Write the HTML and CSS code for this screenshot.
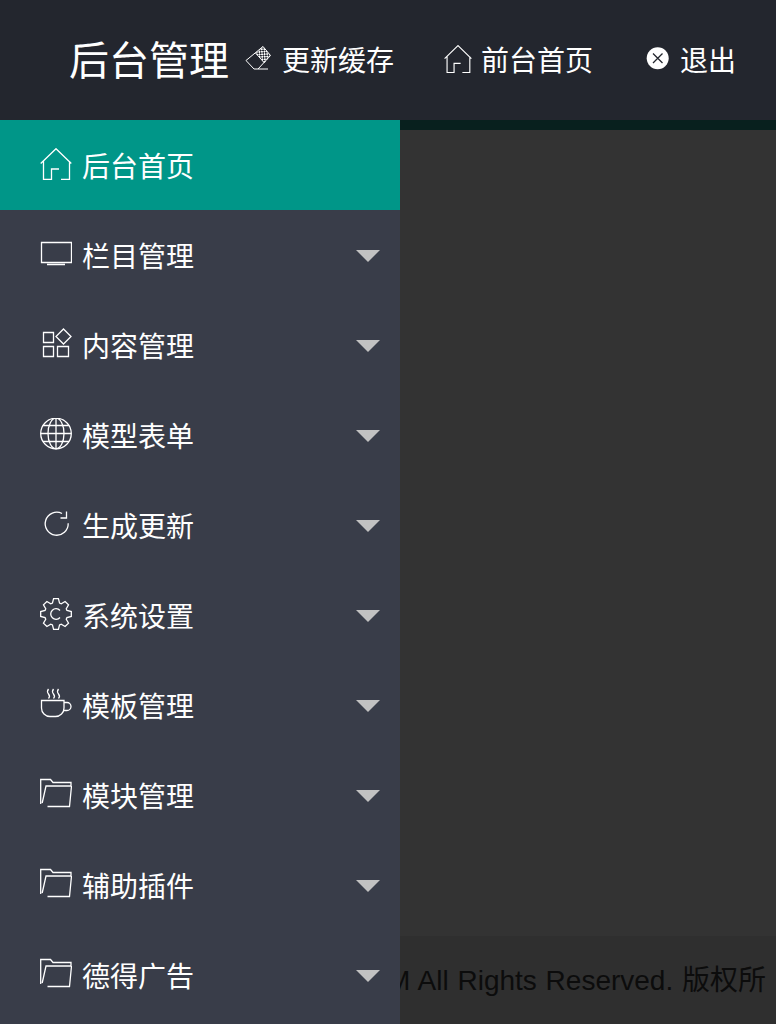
FILE: index.html
```html
<!DOCTYPE html>
<html lang="zh-CN">

<head>
    <meta charset="UTF-8">
    <meta name="viewport" content="width=device-width, initial-scale=1.0">
    <title>后台管理</title>
    <link rel="stylesheet" href="styles.css">
</head>

<body>
    <svg class="defs" width="0" height="0">
        <defs>
            <pattern id="p-check" width="3.600" height="3.600" patternUnits="userSpaceOnUse" patternTransform="rotate(42)">
                <rect width="3.600" height="3.600" fill="#fff" />
                <rect width="1.800" height="1.800" fill="#23262e" />
                <rect x="1.800" y="1.800" width="1.800" height="1.800" fill="#23262e" />
            </pattern>
        </defs>
        <symbol id="i-home" viewBox="0 0 32 32">
            <path d="M.7 15.500 16 .7l15.300 14.800M3.500 13v18.500H11.500V21H19M21 31.500h8.500V13" />
        </symbol>
        <symbol id="i-folder" viewBox="0 0 32 32">
            <path d="M.7 26V1.500h9.800l2.500 3h18v3.500M31.500 8H6L2.200 25M7.500 28.500h22L31.500 8" />
        </symbol>
    </svg>

    <header class="header">
        <div class="logo">后台管理</div>
        <nav class="top-nav">
            <a class="top-link link-cache">
                <svg class="top-icon" viewBox="0 0 28 28">
                    <path class="check" d="M18 1.500 25.500 10.500 19.500 18 10.500 8Z" />
                    <path class="thin" d="M18 1.500 25.500 10.500 13 24H9L1 15.500ZM10.500 8 19.500 18M13 24H23" />
                </svg>
                更新缓存
            </a>
            <a class="top-link link-front">
                <svg class="top-icon"><use href="#i-home" /></svg>
                前台首页
            </a>
            <a class="top-link link-exit">
                <svg class="exit-icon" viewBox="0 0 24 24">
                    <circle cx="11.700" cy="11.300" r="11" />
                    <path d="M7 6.500 16.500 16M16.500 6.500 7 16" />
                </svg>
                退出
            </a>
        </nav>
    </header>

    <div class="layout">
        <aside class="side">
            <a class="side-item active">
                <svg class="side-icon"><use href="#i-home" /></svg>
                后台首页
            </a>
            <a class="side-item">
                <svg class="side-icon" viewBox="0 0 32 32">
                    <path d="M1.500 4.500h30v20h-30zM7 26.500h18" />
                </svg>
                栏目管理
                <i class="more"></i>
            </a>
            <a class="side-item">
                <svg class="side-icon" viewBox="0 0 32 32">
                    <path d="M3.500 4.500h10v10h-10zM3.500 18.500h10v10h-10zM17.500 18.500h11v10h-11zM23.500 1l7.500 7.500-7.500 7.500L16 8.500z" />
                </svg>
                内容管理
                <i class="more"></i>
            </a>
            <a class="side-item">
                <svg class="side-icon" viewBox="0 0 32 32">
                    <circle cx="16" cy="15.500" r="15.300" />
                    <ellipse cx="16" cy="15.500" rx="8" ry="15.300" />
                    <path d="M16 .2v30.600M.7 15.500h30.600M3 7.500h26M3 23.500h26" />
                </svg>
                模型表单
                <i class="more"></i>
            </a>
            <a class="side-item">
                <svg class="side-icon" viewBox="0 0 32 32">
                    <path d="M28.200 15.300A11.500 11.500 0 1 1 22 5.500M26.500 3.500V10h-6" />
                </svg>
                生成更新
                <i class="more"></i>
            </a>
            <a class="side-item">
                <svg class="side-icon" viewBox="-16 -16 32 32">
                    <polygon points="10.94,-3.55 15.31,-2.42 15.31,2.42 10.94,3.55 10.25,5.22 12.54,9.11 9.11,12.54 5.22,10.25 3.55,10.94 2.42,15.31 -2.42,15.31 -3.55,10.94 -5.22,10.25 -9.11,12.54 -12.54,9.11 -10.25,5.22 -10.94,3.55 -15.31,2.42 -15.31,-2.42 -10.94,-3.55 -10.25,-5.22 -12.54,-9.11 -9.11,-12.54 -5.22,-10.25 -3.55,-10.94 -2.42,-15.31 2.42,-15.31 3.55,-10.94 5.22,-10.25 9.11,-12.54 12.54,-9.11 10.25,-5.22" />
                    <path d="M4 -3.500A5.300 5.300 0 1 0 4 3.500" />
                </svg>
                系统设置
                <i class="more"></i>
            </a>
            <a class="side-item">
                <svg class="side-icon" viewBox="0 0 32 32">
                    <path d="M1.500 12.500H24V20a8.500 8.500 0 0 1-8.500 8.500H10A8.500 8.500 0 0 1 1.500 20zM24 14.500h3a4 4 0 0 1 0 8h-3.300" />
                    <path d="M8.500 1q-2 2.500 0 5t0 4.500M13.500 1q-2 2.500 0 5t0 4.500M18.500 1q-2 2.500 0 5t0 4.500" />
                </svg>
                模板管理
                <i class="more"></i>
            </a>
            <a class="side-item">
                <svg class="side-icon"><use href="#i-folder" /></svg>
                模块管理
                <i class="more"></i>
            </a>
            <a class="side-item">
                <svg class="side-icon"><use href="#i-folder" /></svg>
                辅助插件
                <i class="more"></i>
            </a>
            <a class="side-item">
                <svg class="side-icon"><use href="#i-folder" /></svg>
                德得广告
                <i class="more"></i>
            </a>
        </aside>
        <main class="main">
            <div class="strip"></div>
            <div class="content"></div>
            <footer class="footer">M All Rights Reserved. 版权所</footer>
        </main>
    </div>
</body>

</html>
```

FILE: styles.css
```css
* {
    box-sizing: border-box;
}

html,
body {
    margin: 0;
    height: 100%;
}

body {
    display: flex;
    flex-direction: column;
    overflow: hidden;
    font-family: "Liberation Sans", "Noto Sans CJK SC", sans-serif;
    color: #fff;
    background-color: #333;
}

.defs {
    position: absolute;
}

svg {
    flex: none;
    fill: none;
    stroke: #fff;
    stroke-width: 1.3;
}

.defs rect {
    stroke: none;
}

.header {
    display: flex;
    align-items: center;
    height: 120px;
    padding: 0 0 2px 69px;
    background-color: #23262e;
}

.logo {
    width: 176px;
    margin-bottom: 2px;
    font-size: 40px;
}

.top-nav {
    display: flex;
    align-items: center;
}

.top-link {
    display: flex;
    align-items: center;
    gap: 9px;
    font-size: 28px;
}

.link-front {
    margin-left: 50px;
}

.link-exit {
    margin-left: 53px;
    gap: 10px;
}

.top-icon {
    width: 28px;
    height: 28px;
}

.check {
    fill: url(#p-check);
    stroke: none;
}

.thin {
    stroke-width: 1;
}

.exit-icon {
    width: 24px;
    height: 24px;
}

.exit-icon circle {
    fill: #fff;
    stroke: none;
}

.exit-icon path {
    stroke: #23262e;
}

.layout {
    display: flex;
    flex: 1;
    min-height: 0;
}

.side {
    width: 400px;
    flex: none;
    background-color: #393d49;
}

.side-item {
    display: flex;
    align-items: center;
    gap: 10px;
    height: 90px;
    padding: 0 20px 0 40px;
    font-size: 28px;
}

.side-item.active {
    background-color: #009688;
}

.side-icon {
    width: 32px;
    height: 32px;
    margin-bottom: 3px;
}

.more {
    width: 0;
    height: 0;
    margin-left: auto;
    margin-top: 2px;
    border-style: solid;
    border-width: 12px 12px 0;
    border-color: #c2c2c2 transparent transparent;
}

.main {
    display: flex;
    flex: 1;
    flex-direction: column;
    min-width: 0;
    overflow: hidden;
}

.strip {
    height: 10px;
    background-color: #08201e;
}

.content {
    flex: 1;
    background-color: #333;
}

.footer {
    display: flex;
    justify-content: flex-end;
    align-items: center;
    height: 88px;
    padding: 0 10px 4px 0;
    font-size: 28px;
    word-spacing: 1px;
    white-space: nowrap;
    color: #0c0c0c;
    background-color: #2f2f2f;
}
```
